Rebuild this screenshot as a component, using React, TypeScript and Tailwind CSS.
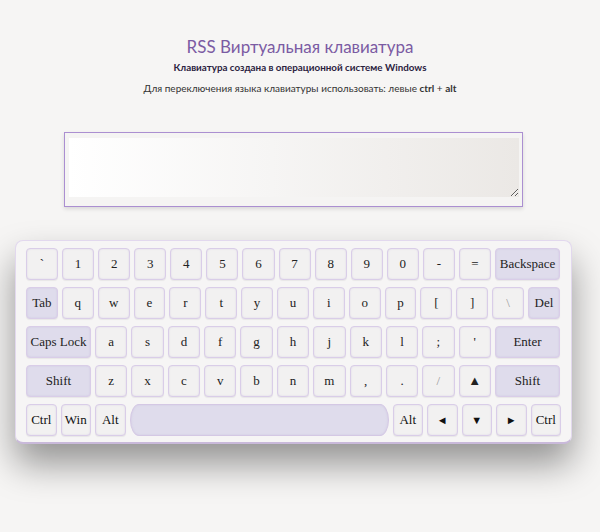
import React from 'react'

type KeyDef = {
  label: string
  w?: string
  special?: boolean
  dim?: boolean
}

const rows: KeyDef[][] = [
  [
    { label: '`' }, { label: '1' }, { label: '2' }, { label: '3' }, { label: '4' },
    { label: '5' }, { label: '6' }, { label: '7' }, { label: '8' }, { label: '9' },
    { label: '0' }, { label: '-' }, { label: '=' },
    { label: 'Backspace', w: 'w-[65px]', special: true },
  ],
  [
    { label: 'Tab', special: true },
    { label: 'q' }, { label: 'w' }, { label: 'e' }, { label: 'r' }, { label: 't' },
    { label: 'y' }, { label: 'u' }, { label: 'i' }, { label: 'o' }, { label: 'p' },
    { label: '[' }, { label: ']' }, { label: '\\', dim: true },
    { label: 'Del', special: true },
  ],
  [
    { label: 'Caps Lock', w: 'w-[65px]', special: true },
    { label: 'a' }, { label: 's' }, { label: 'd' }, { label: 'f' }, { label: 'g' },
    { label: 'h' }, { label: 'j' }, { label: 'k' }, { label: 'l' }, { label: ';' },
    { label: "'" },
    { label: 'Enter', w: 'w-[65px]', special: true },
  ],
  [
    { label: 'Shift', w: 'w-[65px]', special: true },
    { label: 'z' }, { label: 'x' }, { label: 'c' }, { label: 'v' }, { label: 'b' },
    { label: 'n' }, { label: 'm' }, { label: ',' }, { label: '.' }, { label: '/', dim: true },
    { label: '▲' },
    { label: 'Shift', w: 'w-[65px]', special: true },
  ],
]

function Key({ k }: { k: KeyDef }) {
  return (
    <div
      className={`${k.w ? `${k.w} shrink-0` : 'flex-1 min-w-0'} h-8 flex items-center justify-center rounded-[4px] border border-[#d9cde8] shadow-[inset_0_0_2px_rgba(180,160,210,0.35),0_1px_1px_rgba(0,0,0,0.06)] text-[13px] ${
        k.special ? 'bg-[#dfdcec]' : 'bg-[#f2f1f1]'
      } ${k.dim ? 'text-[#999]' : 'text-[#222]'}`}
    >
      {k.label}
    </div>
  )
}

function SmallKey({ label, arrow }: { label: string; arrow?: boolean }) {
  return (
    <div
      className={`w-[30.5px] h-8 shrink-0 flex items-center justify-center rounded-[4px] border border-[#d9cde8] bg-[#f2f1f1] shadow-[inset_0_0_2px_rgba(180,160,210,0.35),0_1px_1px_rgba(0,0,0,0.06)] text-[#111] ${
        arrow ? 'text-[11px]' : 'text-[13px]'
      }`}
    >
      {label}
    </div>
  )
}

export default function App() {
  return (
    <div className="min-h-screen bg-[#f6f5f4] font-['Lato',sans-serif] overflow-hidden">
      {/* Header */}
      <div className="pt-[35px] text-center">
        <h1 className="text-[17px] leading-6 text-[#7b5ba3]">RSS Виртуальная клавиатура</h1>
        <p className="mt-[1px] text-[9.8px] leading-[14px] font-bold text-[#2b2240]">
          Клавиатура создана в операционной системе Windows
        </p>
        <p className="mt-[7px] text-[10px] leading-[14px] text-[#333]">
          Для переключения языка клавиатуры использовать: левые <b>ctrl</b> + <b>alt</b>
        </p>
      </div>

      {/* Textarea */}
      <div className="mt-[37px] ml-[64px] w-[459px] h-[75px] border border-[#ab8fd1] bg-[#f5f4f3] pt-[5px] pl-[4px] shadow-[0_2px_4px_rgba(0,0,0,0.12)]">
        <textarea className="block w-[450px] h-[59px] resize bg-[linear-gradient(90deg,#ffffff,#f6f5f4_45%,#ebe8e5)] outline-none" />
      </div>

      {/* Keyboard */}
      <div className="mt-[33px] ml-[15px] w-[557px] h-[204px] rounded-[8px] bg-[#f6f5f5] border border-[#e2d8ee] border-b-[2px] border-b-[#c9b9da] shadow-[0_20px_36px_rgba(0,0,0,0.4)] pt-[7px] pl-[10px] font-['Liberation_Serif',serif]">
        <div className="flex flex-col gap-[7px]">
          {rows.map((row, i) => (
            <div key={i} className="flex gap-1 w-[534px]">
              {row.map((k, j) => (
                <Key key={j} k={k} />
              ))}
            </div>
          ))}
          <div className="flex gap-1 w-[535px]">
            <SmallKey label="Ctrl" />
            <SmallKey label="Win" />
            <SmallKey label="Alt" />
            <div className="flex-1 h-8 rounded-[10px/18px] border border-[#d4c8e4] bg-[#dfdcec] shadow-[inset_0_0_2px_rgba(180,160,210,0.35)]" />
            <SmallKey label="Alt" />
            <SmallKey label="◄" arrow />
            <SmallKey label="▼" arrow />
            <SmallKey label="►" arrow />
            <SmallKey label="Ctrl" />
          </div>
        </div>
      </div>
    </div>
  )
}
